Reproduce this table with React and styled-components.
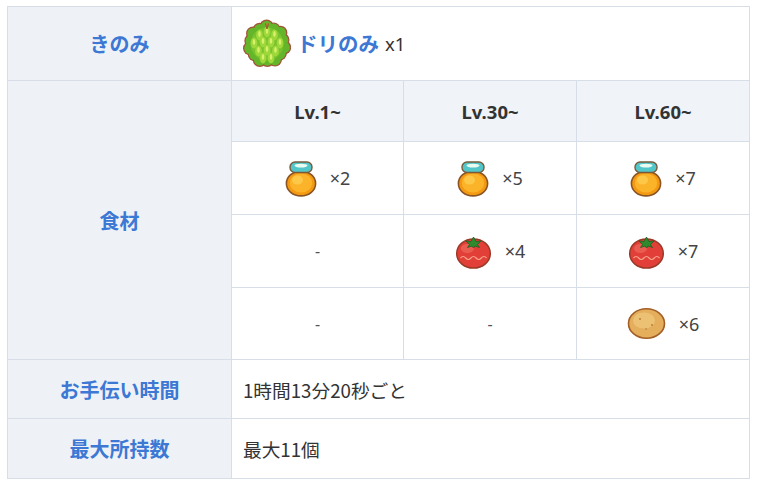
import React from "react";
import styled, { createGlobalStyle } from "styled-components";

const GlobalStyle = createGlobalStyle`
    html, body {
        margin: 0;
        padding: 0;
        background: #ffffff;
    }
    body {
        font-family: "Noto Sans", "Noto Sans CJK JP", sans-serif;
        color: #333333;
    }
`;

const HoneyIcon = () => (
    <svg width="32" height="37" viewBox="0 0 32 37">
        <ellipse cx="16" cy="23.5" rx="14.6" ry="12.4" fill="#f49a12" stroke="#8a5424" strokeWidth="1.6" />
        <ellipse cx="16" cy="23" rx="11" ry="9.5" fill="#fbb42a" />
        <ellipse cx="12.5" cy="20" rx="5.5" ry="4.5" fill="#fdca4c" opacity="0.85" />
        <rect x="5" y="2" width="22" height="10.5" rx="5" fill="#52c6c8" stroke="#7a5a3a" strokeWidth="1.4" />
        <ellipse cx="16" cy="5.6" rx="6.5" ry="1.9" fill="#eafcf2" />
    </svg>
);

const TomatoIcon = () => (
    <svg width="37" height="35" viewBox="0 0 37 35">
        <ellipse cx="18.5" cy="19.5" rx="16.8" ry="14.6" fill="#e23f39" stroke="#9a3a26" strokeWidth="1.5" />
        <ellipse cx="12.5" cy="14.5" rx="6.5" ry="4.5" fill="#ef6a5a" opacity="0.7" />
        <path d="M5.5 24 q2.6 -3 5.2 0 t5.2 0 t5.2 0 t5.2 0 t5.2 0" fill="none" stroke="#f7a58a" strokeWidth="1.2" />
        <path d="M18.5 3 L21 7.5 L26 7 L22.5 10.5 L24.5 13.5 L20 12 L18.5 14 L17 12 L12.5 13.5 L14.5 10.5 L11 7 L16 7.5 Z" fill="#2f8a2e" stroke="#215d22" strokeWidth="0.8" />
    </svg>
);

const PotatoIcon = () => (
    <svg width="39" height="33" viewBox="0 0 39 33">
        <ellipse cx="19.5" cy="16.5" rx="18" ry="14.8" fill="#e4ae5c" stroke="#a35e26" strokeWidth="1.6" />
        <ellipse cx="17" cy="13.5" rx="11" ry="8" fill="#efc67a" opacity="0.8" />
        <circle cx="13" cy="12" r="0.9" fill="#b07a3a" />
        <circle cx="25" cy="18" r="0.9" fill="#b07a3a" />
        <circle cx="19" cy="22" r="0.8" fill="#b07a3a" />
    </svg>
);

// bumpy rim of the berry, slightly irregular
const bumps = Array.from({ length: 14 }, (_, i) => {
    const a = (i / 14) * Math.PI * 2 + 0.2;
    const k = i % 2 ? 16 : 17.5;
    return { x: 24 + Math.cos(a) * k, y: 27 + Math.sin(a) * k };
});

const leaves = [
    [24, 15], [16.5, 18], [31.5, 18], [11, 26], [37, 26], [20, 25], [28, 25],
    [24, 33], [15.5, 34], [32.5, 34], [20, 41], [28, 41],
];

const DoriIcon = () => (
    <svg width="48" height="52" viewBox="0 0 48 52">
        {bumps.map((b, i) => (
            <circle key={"o" + i} cx={b.x} cy={b.y} r="7" fill="#a3523a" />
        ))}
        <circle cx="24" cy="27" r="17" fill="#a3523a" />
        {bumps.map((b, i) => (
            <circle key={"g" + i} cx={b.x} cy={b.y} r="5.8" fill="#64b52a" />
        ))}
        <circle cx="24" cy="27" r="16.5" fill="#78c22e" />
        {leaves.map(([x, y], i) => (
            <ellipse key={"l" + i} cx={x} cy={y} rx="3.4" ry="5.4" fill="#9ed83a" />
        ))}
        {leaves.map(([x, y], i) => (
            <ellipse key={"h" + i} cx={x} cy={y - 1} rx="1.3" ry="3" fill="#d8f06a" />
        ))}
        <path d="M22.5 6.5 L24 12 L25.5 6.5" fill="#c97a3a" stroke="#9a5a2a" strokeWidth="1" />
    </svg>
);

const levels = ["Lv.1~", "Lv.30~", "Lv.60~"];

const ingredientRows = [
    [{ icon: HoneyIcon, n: 2 }, { icon: HoneyIcon, n: 5 }, { icon: HoneyIcon, n: 7 }],
    [null, { icon: TomatoIcon, n: 4 }, { icon: TomatoIcon, n: 7 }],
    [null, null, { icon: PotatoIcon, n: 6 }],
];

const App = () => {
    return (
        <>
            <GlobalStyle />
            <Table>
                <Label>きのみ</Label>
                <Value $span={3}>
                    <BerryWrap>
                        <DoriIcon />
                        <BerryName>ドリのみ</BerryName>
                        <BerryCount>x1</BerryCount>
                    </BerryWrap>
                </Value>

                <Label $rows={4}>食材</Label>
                {levels.map((lv) => (
                    <LevelHead key={lv}>{lv}</LevelHead>
                ))}
                {ingredientRows.map((row, r) =>
                    row.map((cell, c) => (
                        <IngredientCell key={r + "-" + c}>
                            {cell ? (
                                <>
                                    <cell.icon />
                                    <Amount>×{cell.n}</Amount>
                                </>
                            ) : (
                                <Dash>-</Dash>
                            )}
                        </IngredientCell>
                    ))
                )}

                <Label>お手伝い時間</Label>
                <Value $span={3}>1時間13分20秒ごと</Value>

                <Label>最大所持数</Label>
                <Value $span={3}>最大11個</Value>
            </Table>
        </>
    );
};

export default App;

const Table = styled.div`
    display: grid;
    grid-template-columns: 223px 171px 172px 172px;
    grid-template-rows: 73px 60px 72px 72px 71px 58px 59px;
    gap: 1px;
    width: max-content;
    margin: 6px 0 0 7px;
    background: #d7dee8;
    border: 1px solid #d7dee8;
`;

const Label = styled.div`
    grid-row: span ${(p) => p.$rows || 1};
    display: flex;
    align-items: center;
    justify-content: center;
    background: #eef2f7;
    color: #3c78d4;
    font-family: "Noto Sans CJK JP", sans-serif;
    font-weight: 700;
    font-size: 20px;
`;

const Value = styled.div`
    grid-column: span ${(p) => p.$span || 1};
    display: flex;
    align-items: center;
    padding-left: 11px;
    background: #ffffff;
    font-family: "Noto Sans CJK JP", sans-serif;
    font-size: 18.7px;
    color: #333333;
`;

const BerryWrap = styled.div`
    display: flex;
    align-items: center;
    gap: 6px;
    margin-top: -2px;
`;

const BerryName = styled.span`
    color: #3c78d4;
    font-weight: 700;
    font-size: 20.5px;
`;

const BerryCount = styled.span`
    font-family: "Noto Sans", sans-serif;
    font-size: 18.5px;
    color: #333333;
    margin-top: 2px;
`;

const LevelHead = styled.div`
    display: flex;
    align-items: center;
    justify-content: center;
    background: #f0f3f7;
    font-weight: 700;
    font-size: 18.5px;
    color: #333333;
`;

const IngredientCell = styled.div`
    display: flex;
    align-items: center;
    justify-content: center;
    gap: 13px;
    background: #ffffff;
`;

const Amount = styled.span`
    font-size: 18px;
    color: #444444;
`;

const Dash = styled.span`
    font-size: 16px;
    color: #555555;
`;
